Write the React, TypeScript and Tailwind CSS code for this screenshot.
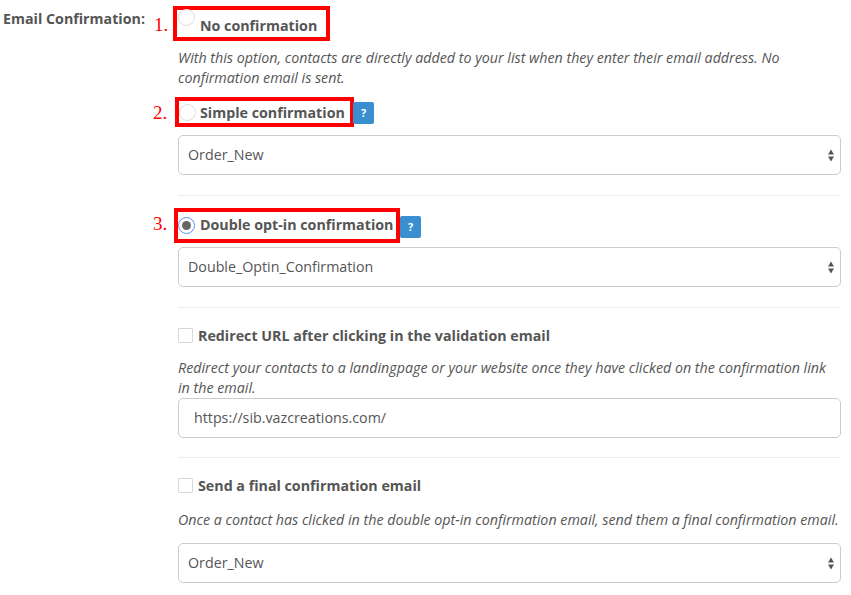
function HelpBadge() {
  return (
    <span className="flex h-[22px] w-[21px] shrink-0 items-center justify-center rounded-[2px] bg-[#3a8fd0] text-[11px] font-bold text-white">
      ?
    </span>
  )
}

function Radio({ checked = false }: { checked?: boolean }) {
  return (
    <span
      className={
        checked
          ? "flex h-[17px] w-[17px] shrink-0 items-center justify-center rounded-full border border-[#5b8def] bg-white"
          : "flex h-[17px] w-[17px] shrink-0 items-center justify-center rounded-full border border-[#dcdcdc] bg-white"
      }
    >
      {checked && <span className="h-[9px] w-[9px] rounded-full bg-[#666]" />}
    </span>
  )
}

function Checkbox() {
  return <span className="block h-[15px] w-[15px] shrink-0 rounded-[1px] border border-[#d8d8d8] bg-white" />
}

function SelectBox({ value, className }: { value: string; className: string }) {
  return (
    <div className={`flex h-10 items-center justify-between rounded-[5px] border border-[#ccc] bg-white pl-[9px] pr-[5px] text-[#555] ${className}`}>
      <span className="pb-[1px]">{value}</span>
      <svg width="8" height="13" viewBox="0 0 8 13" className="fill-[#555]">
        <path d="M4 0.5 L7 5.5 L1 5.5 Z" />
        <path d="M4 12.5 L7 7.5 L1 7.5 Z" />
      </svg>
    </div>
  )
}

function Marker({ text, className }: { text: string; className: string }) {
  return (
    <span className={`absolute font-['Liberation_Serif',serif] text-[19px] leading-none text-[#f00] ${className}`}>
      {text}
    </span>
  )
}

export default function App() {
  return (
    <div className="relative flex h-[595px] w-[851px] overflow-hidden bg-white font-['Open_Sans',sans-serif] text-[14.25px] text-[#555]">
      <div className="w-[178px] shrink-0 pl-[3px] pt-[9px] font-bold leading-[19px]">Email Confirmation:</div>

      <div className="relative w-[663px] shrink-0">
        <Marker text="1." className="left-[-24px] top-[15px]" />
        <Marker text="2." className="left-[-25px] top-[103px]" />
        <Marker text="3." className="left-[-25px] top-[214px]" />

        <div className="relative ml-[-5px] mt-[6px] flex h-[35px] w-[157px] border-[4px] border-[#f00]">
          <span className="absolute left-[1px] top-[-1px]"><Radio /></span>
          <span className="absolute left-[23px] top-[6px] whitespace-nowrap font-bold leading-[19px]">No confirmation</span>
        </div>

        <p className="mt-[7px] italic leading-[20px]">
          With this option, contacts are directly added to your list when they enter their email address. No confirmation email is sent.
        </p>

        <div className="ml-[-3px] mt-[9px] flex items-center">
          <div className="flex h-[30px] w-[179px] items-center border-[4px] border-[#f00]">
            <Radio />
            <span className="ml-[4px] whitespace-nowrap pt-[1px] font-bold">Simple confirmation</span>
          </div>
          <span className="ml-[-1px] mt-[2px]"><HelpBadge /></span>
        </div>

        <SelectBox value="Order_New" className="mt-[8px]" />
        <hr className="mt-[20px] border-t border-[#eee]" />

        <div className="ml-[-4px] mt-[12px] flex items-center">
          <div className="flex h-[35px] w-[226px] items-center border-[4px] border-[#f00]">
            <Radio checked />
            <span className="ml-[5px] whitespace-nowrap pb-[1px] font-bold">Double opt-in confirmation</span>
          </div>
          <span className="mt-[3px]"><HelpBadge /></span>
        </div>

        <SelectBox value="Double_Optin_Confirmation" className="mt-[4px]" />
        <hr className="mt-[20px] border-t border-[#eee]" />

        <div className="mt-[18px] flex h-[19px] items-center">
          <Checkbox />
          <span className="ml-[5px] whitespace-nowrap font-bold">Redirect URL after clicking in the validation email</span>
        </div>

        <p className="mt-[13px] italic leading-[20px]">
          Redirect your contacts to a landingpage or your website once they have clicked on the confirmation link in the email.
        </p>

        <div className="flex h-10 items-center rounded-[5px] border border-[#ccc] bg-white pl-[15px]">
          https://sib.vazcreations.com/
        </div>
        <hr className="mt-[19px] border-t border-[#eee]" />

        <div className="mt-[18px] flex h-[19px] items-center">
          <Checkbox />
          <span className="ml-[5px] whitespace-nowrap font-bold">Send a final confirmation email</span>
        </div>

        <p className="mt-[15px] whitespace-nowrap italic leading-[20px]">
          Once a contact has clicked in the double opt-in confirmation email, send them a final confirmation email.
        </p>

        <SelectBox value="Order_New" className="mt-[13px]" />
      </div>
    </div>
  )
}
